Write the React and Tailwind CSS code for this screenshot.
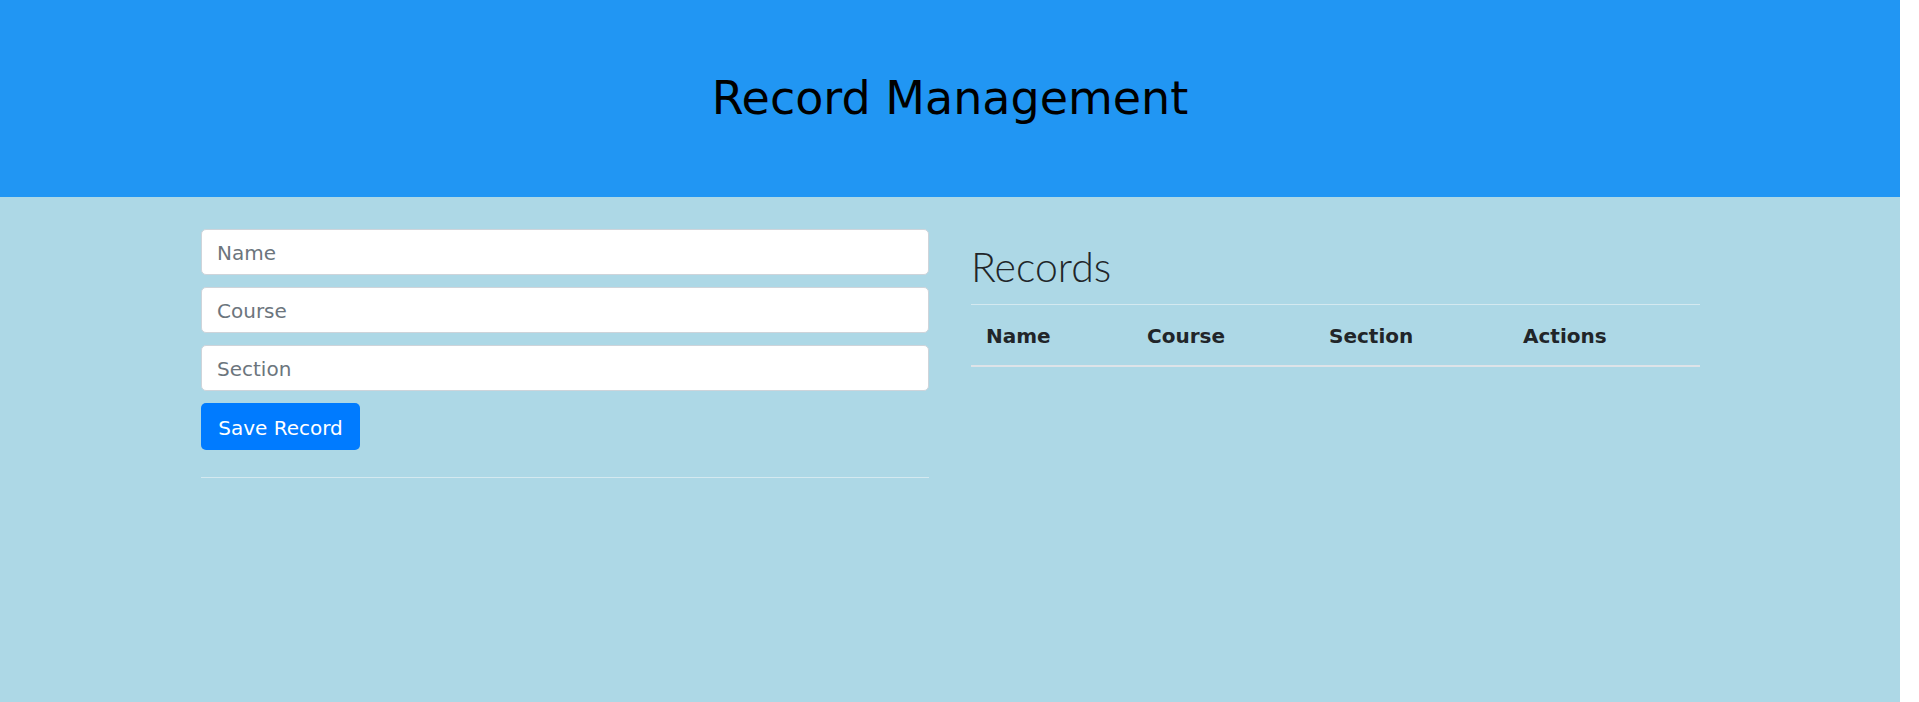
import React from "react";

export default function App() {
  const body = { fontFamily: '"DejaVu Sans", Verdana, sans-serif' };
  return (
    <div className="flex min-h-[702px] w-[1919px] bg-white" style={body}>
      <div className="flex w-[1900px] flex-col bg-[#add8e6]">
        <header className="flex h-[197px] items-center justify-center bg-[#2196f3]">
          <h1 className="text-[46px] font-normal leading-[1.2] text-black">Record Management</h1>
        </header>
        <main className="flex gap-[42px] pl-[201px] pt-[32px]">
          <div className="flex w-[728px] flex-col">
            <div className="flex flex-col gap-[12px]">
              {["Name", "Course", "Section"].map((p) => (
                <input
                  key={p}
                  placeholder={p}
                  className="h-[46px] w-full rounded-[5px] border border-[#ced4da] bg-white px-[15px] pt-[2px] text-[20px] text-[#495057] placeholder:text-[#6c757d] outline-none"
                />
              ))}
            </div>
            <button className="mt-[12px] h-[47px] w-[159px] rounded-[5px] bg-[#007bff] pt-[2px] text-[20px] text-white">
              Save Record
            </button>
            <div className="mt-[27px] h-px w-full bg-[#d4e9f0]" />
          </div>
          <div className="flex w-[729px] flex-col">
            <h2
              className="mt-[13px] mb-[13px] text-[41px] font-light leading-[1.2] text-[#212529]"
              style={{ fontFamily: 'Lato, "Noto Sans", sans-serif' }}
            >
              Records
            </h2>
            <table className="w-full border-collapse text-left text-[20px] text-[#212529]">
              <thead>
                <tr className="border-t border-[#d4e9f0]">
                  <th className="w-[161px] border-b-2 border-[#dde3e8] px-[15px] pt-[16px] pb-[14px] font-bold leading-[30px]">Name</th>
                  <th className="w-[182px] border-b-2 border-[#dde3e8] px-[15px] pt-[16px] pb-[14px] font-bold leading-[30px]">Course</th>
                  <th className="w-[194px] border-b-2 border-[#dde3e8] px-[15px] pt-[16px] pb-[14px] font-bold leading-[30px]">Section</th>
                  <th className="border-b-2 border-[#dde3e8] px-[15px] pt-[16px] pb-[14px] font-bold leading-[30px]">Actions</th>
                </tr>
              </thead>
              <tbody></tbody>
            </table>
          </div>
        </main>
      </div>
    </div>
  );
}
